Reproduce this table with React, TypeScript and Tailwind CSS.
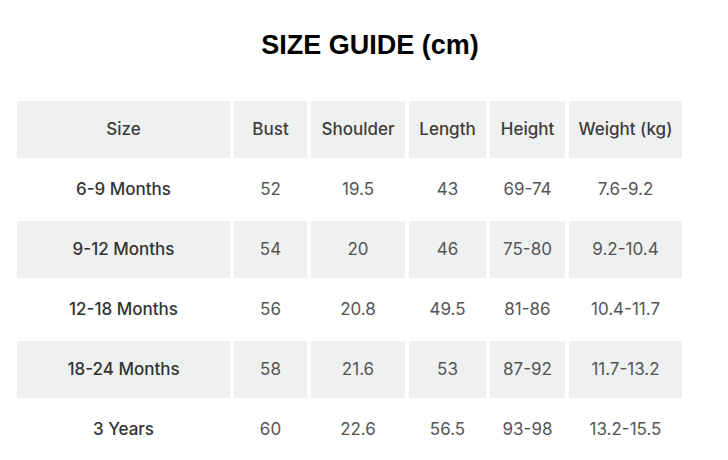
import React from "react";

//-- Data --//
const headers = ["Size", "Bust", "Shoulder", "Length", "Height", "Weight (kg)"];

const rows: string[][] = [
  ["6-9 Months", "52", "19.5", "43", "69-74", "7.6-9.2"],
  ["9-12 Months", "54", "20", "46", "75-80", "9.2-10.4"],
  ["12-18 Months", "56", "20.8", "49.5", "81-86", "10.4-11.7"],
  ["18-24 Months", "58", "21.6", "53", "87-92", "11.7-13.2"],
  ["3 Years", "60", "22.6", "56.5", "93-98", "13.2-15.5"],
];

const colWidths = ["w-[213px]", "w-[73px]", "w-[94px]", "w-[77px]", "w-[75px]", "w-[113px]"];

//-- ***** ***** ***** Exported Component ***** ***** ***** --//
export default function App() {
  return (
    <div className="h-[460px] w-[728px] overflow-hidden bg-white">
      {/* Title */}
      <h1 className="pl-[12px] pt-[29px] text-center font-['Liberation_Sans',Arial,sans-serif] text-[27px] font-bold leading-[32px] text-black">
        SIZE GUIDE (cm)
      </h1>

      {/* Table */}
      <table className="ml-[13px] mt-[37px] table-fixed border-separate border-spacing-x-[4px] border-spacing-y-[3px] font-['Inter',sans-serif] text-[17px]">
        <colgroup>
          {colWidths.map((w, i) => (
            <col key={i} className={w} />
          ))}
        </colgroup>
        <thead>
          <tr>
            {headers.map((h) => (
              <th
                key={h}
                className="h-[57px] bg-[#eff1f0] p-0 text-center font-medium text-[#3d3d3d]"
              >
                {h}
              </th>
            ))}
          </tr>
        </thead>
        <tbody>
          {rows.map((row, r) => (
            <tr key={row[0]}>
              {row.map((cell, c) => (
                <td
                  key={c}
                  className={
                    "h-[57px] p-0 text-center " +
                    (r % 2 === 1 ? "bg-[#eff1f0] " : "bg-white ") +
                    (c === 0 ? "font-medium text-[#333333]" : "font-normal text-[#555555]")
                  }
                >
                  {cell}
                </td>
              ))}
            </tr>
          ))}
        </tbody>
      </table>
    </div>
  );
}
